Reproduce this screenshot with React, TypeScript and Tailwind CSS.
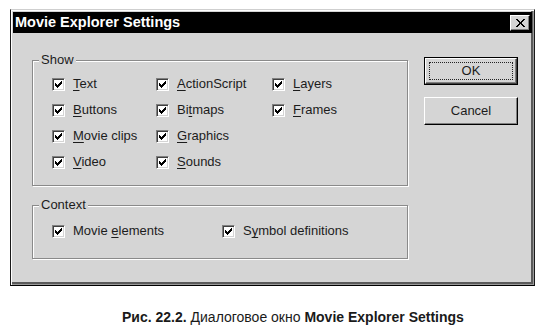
import React from "react";

function Check() {
  return (
    <span className="w-[13px] h-[13px] shrink-0 bg-white border border-t-[#808080] border-l-[#808080] border-r-white border-b-white shadow-[inset_1px_1px_0_#404040,inset_-1px_-1px_0_#d4d4d4] flex items-center justify-center">
      <svg width="7" height="7" viewBox="0 0 7 7" shapeRendering="crispEdges">
        <path
          d="M0 2h1v3H0zM1 3h1v3H1zM2 4h1v3H2zM3 3h1v3H3zM4 2h1v3H4zM5 1h1v3H5zM6 0h1v3H6z"
          fill="#000"
        />
      </svg>
    </span>
  );
}

function Item({ pre, u, post }: { pre?: string; u: string; post: string }) {
  return (
    <div className="flex items-center gap-[8px] h-[26px]">
      <Check />
      <span className="whitespace-nowrap">
        {pre}
        <span className="underline underline-offset-[2px] decoration-1">{u}</span>
        {post}
      </span>
    </div>
  );
}

export default function App() {
  return (
    <div
      className="w-[545px] h-[329px] bg-white flex flex-col text-[13px] text-[#1c1c1c]"
      style={{ fontFamily: '"Liberation Sans", Arial, sans-serif' }}
    >
      <div className="ml-[10px] mt-[9px] w-[525px] h-[277px] bg-[#d5d5d5] border border-t-[#cfcfcf] border-l-[#1a1a1a] border-r-[#1a1a1a] border-b-black shadow-[inset_1px_1px_0_#fff,inset_-1px_-1px_0_#9a9a9a,inset_-3px_-3px_0_#5a5a5a] p-[2px] flex flex-col">
        <div className="h-[21px] bg-black flex items-center justify-between pl-[2px] pr-[2px]">
          <span className="text-white font-bold text-[14.5px] leading-none">Movie Explorer Settings</span>
          <span className="w-[20px] h-[16px] bg-[#d4d4d4] border border-t-white border-l-white border-r-black border-b-black shadow-[inset_-1px_-1px_0_#808080] flex items-center justify-center">
            <svg width="9" height="8" viewBox="0 0 9 8" shapeRendering="crispEdges">
              <path
                d="M0 0h2v1H0zM7 0h2v1H7zM1 1h2v1H1zM6 1h2v1H6zM2 2h2v1H2zM5 2h2v1H5zM3 3h3v1H3zM3 4h3v1H3zM2 5h2v1H2zM5 5h2v1H5zM1 6h2v1H1zM6 6h2v1H6zM0 7h2v1H0zM7 7h2v1H7z"
                fill="#000"
              />
            </svg>
          </span>
        </div>
        <div className="flex pl-[19px] pt-[19px]">
          <div className="flex flex-col">
            <fieldset className="w-[376px] h-[134px] border border-[#8a8a8a] shadow-[inset_1px_1px_0_#fff,1px_1px_0_#fff]">
              <legend className="ml-[6px] px-[2px] bg-[#d5d5d5] leading-[16px]">Show</legend>
              <div className="pl-[19px] pt-[3px] grid grid-flow-col grid-rows-[repeat(4,26px)] grid-cols-[104px_116px_auto]">
                <Item u="T" post="ext" />
                <Item u="B" post="uttons" />
                <Item u="M" post="ovie clips" />
                <Item u="V" post="ideo" />
                <Item u="A" post="ctionScript" />
                <Item pre="Bi" u="t" post="maps" />
                <Item u="G" post="raphics" />
                <Item u="S" post="ounds" />
                <Item u="L" post="ayers" />
                <Item u="F" post="rames" />
              </div>
            </fieldset>
            <fieldset className="mt-[11px] w-[376px] h-[62px] border border-[#8a8a8a] shadow-[inset_1px_1px_0_#fff,1px_1px_0_#fff]">
              <legend className="ml-[6px] px-[2px] bg-[#d5d5d5] leading-[16px]">Context</legend>
              <div className="pl-[19px] pt-[5px] grid grid-cols-[170px_auto]">
                <Item pre="Movie " u="e" post="lements" />
                <Item pre="S" u="y" post="mbol definitions" />
              </div>
            </fieldset>
          </div>
          <div className="ml-[16px] mt-[5px] flex flex-col gap-[12px]">
            <div className="w-[94px] h-[28px] border border-black bg-[#d5d5d5]">
              <div className="h-full w-full border border-t-white border-l-white border-r-[#404040] border-b-[#404040] shadow-[inset_-1px_-1px_0_#808080] p-[3px]">
                <div className="h-full w-full border border-dotted border-[#222] flex items-center justify-center">OK</div>
              </div>
            </div>
            <div className="w-[94px] h-[28px] bg-[#d5d5d5] border border-t-white border-l-white border-r-black border-b-black shadow-[inset_-1px_-1px_0_#808080] flex items-center justify-center">
              Cancel
            </div>
          </div>
        </div>
      </div>
      <div className="mt-[22px] pl-[122px] text-[14px] leading-[18px] text-[#1a1a1a] whitespace-nowrap">
        <span className="font-bold">Рис. 22.2.</span> Диалоговое окно <span className="font-bold">Movie Explorer Settings</span>
      </div>
    </div>
  );
}
